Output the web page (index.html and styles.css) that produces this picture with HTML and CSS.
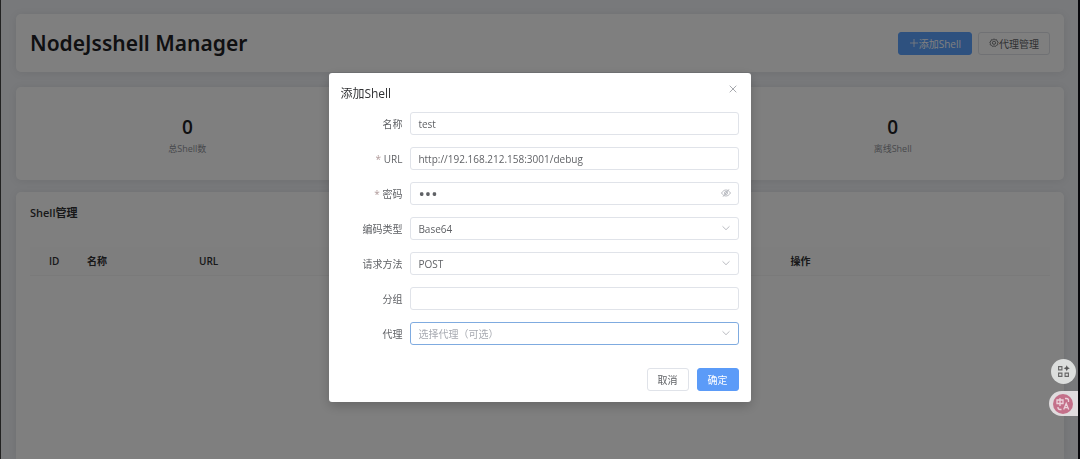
FILE: index.html
```html
<!DOCTYPE html>
<html lang="zh-CN">
<head>
<meta charset="utf-8">
<meta name="viewport" content="width=device-width, initial-scale=1">
<title>NodeJsshell Manager</title>
<link rel="stylesheet" href="styles.css">
</head>
<body>
<div class="page">
  <header class="card header">
    <h1 class="title">NodeJsshell Manager</h1>
    <div class="actions">
      <button class="btn btn-add" type="button">
        <svg class="icon" viewBox="0 0 10 10" aria-hidden="true"><path d="M5 1v8M1 5h8"/></svg>添加Shell
      </button>
      <button class="btn" type="button">
        <svg class="icon" viewBox="0 0 10 10" aria-hidden="true"><path d="M5 .8l1.1 1 1.5-.1.4 1.4 1.2.9-.6 1.3.3 1.4-1.4.5-.9 1.2L5 8l-1.6.4-.9-1.2-1.4-.5.3-1.4-.6-1.3L2 3.1l.4-1.4 1.5.1z"/><circle cx="5" cy="4.8" r="1.6"/></svg>代理管理
      </button>
    </div>
  </header>

  <section class="card stats">
    <div class="stat"><div class="stat-value">0</div><div class="stat-label">总Shell数</div></div>
    <div class="stat stat-last"><div class="stat-value">0</div><div class="stat-label">离线Shell</div></div>
  </section>

  <main class="card panel">
    <h2 class="panel-title">Shell管理</h2>
    <table class="table">
      <colgroup><col class="c-id"><col class="c-name"><col class="c-url"><col class="c-ops"></colgroup>
      <thead><tr><th class="th-id">ID</th><th>名称</th><th>URL</th><th>操作</th></tr></thead>
    </table>
  </main>
</div>

<div class="overlay">
  <form class="dialog" role="dialog" aria-labelledby="dialog-title">
    <div class="dialog-head">
      <h2 class="dialog-title" id="dialog-title">添加Shell</h2>
      <button class="close" type="button" aria-label="关闭">
        <svg class="icon" viewBox="0 0 10 10" aria-hidden="true"><path d="M1.7 1.7l6.6 6.6M8.3 1.7L1.7 8.3"/></svg>
      </button>
    </div>
    <div class="fields">
      <div class="row"><label for="name">名称</label><div class="control"><input id="name" type="text" value="test"></div></div>
      <div class="row"><label class="required" for="url">URL</label><div class="control"><input id="url" type="text" value="http://192.168.212.158:3001/debug"></div></div>
      <div class="row"><label class="required" for="password">密码</label><div class="control"><input id="password" type="password" value="123">
        <svg class="icon suffix" viewBox="0 0 10 10" aria-hidden="true"><path d="M.5 5C2 2.8 3.4 2 5 2s3 .8 4.500 3C8 7.200 6.600 8 5 8S2 7.200.5 5zM2 8.700L8 1.300"/><circle cx="5" cy="5" r="1.500"/></svg></div></div>
      <div class="row"><label for="encoding">编码类型</label><div class="control"><select id="encoding"><option>Base64</option></select>
        <svg class="icon suffix" viewBox="0 0 10 10" aria-hidden="true"><path d="M1.500 3.300L5 6.700l3.500-3.400"/></svg></div></div>
      <div class="row"><label for="method">请求方法</label><div class="control"><select id="method"><option>POST</option></select>
        <svg class="icon suffix" viewBox="0 0 10 10" aria-hidden="true"><path d="M1.500 3.300L5 6.700l3.500-3.400"/></svg></div></div>
      <div class="row"><label for="group">分组</label><div class="control"><input id="group" type="text"></div></div>
      <div class="row"><label for="proxy">代理</label><div class="control"><select class="active placeholder" id="proxy"><option>选择代理（可选）</option></select>
        <svg class="icon suffix" viewBox="0 0 10 10" aria-hidden="true"><path d="M1.500 3.300L5 6.700l3.500-3.400"/></svg></div></div>
    </div>
    <div class="dialog-foot">
      <button class="btn" type="button">取消</button>
      <button class="btn btn-primary" type="submit">确定</button>
    </div>
  </form>
</div>

<aside class="dock">
  <button class="dock-apps" type="button" aria-label="应用">
    <svg viewBox="0 0 14 14" aria-hidden="true"><path d="M1.700 1.700h3.600v3.600H1.700zM1.700 8.700h3.600v3.600H1.700zM8.700 8.700h3.600v3.600H8.700z"/><path class="spark" d="M10.500.2l1 2.300 2.300 1-2.300 1-1 2.300-1-2.300-2.300-1 2.300-1z"/></svg>
  </button>
  <button class="dock-translate" type="button" aria-label="翻译">
    <svg viewBox="0 0 20 20" aria-hidden="true"><circle class="disc" cx="10" cy="10" r="10"/><path d="M4 6h6v3.500H4zM7 4v8M12 4.500h1.500q2 0 2 2V8M5 13v.5q0 2 2 2h1.500M10.700 15.500l2.500-6 2.500 6M11.600 13.600h3.200"/></svg>
  </button>
</aside>
</body>
</html>
```
FILE: styles.css
```css
* { box-sizing: border-box; }

html, body { height: 100%; }

body {
  margin: 0;
  overflow: hidden;
  font-family: "Open Sans", "Noto Sans CJK SC", sans-serif;
  font-size: 10px;
  color: #606266;
}

h1, h2 { margin: 0; }

button, input, select { font: inherit; color: inherit; }

.page {
  display: flex;
  flex-direction: column;
  gap: 15px;
  min-height: 100%;
  padding: 14px 14px 0 15px;
  background: #f0f2f6;
  border-left: 1px solid #444;
  border-right: 2px solid #101018;
}

.card {
  background: #fff;
  border-radius: 5px;
  box-shadow: 0 1px 8px rgba(0, 0, 0, 0.08);
}

.header {
  display: flex;
  align-items: center;
  justify-content: space-between;
  padding: 17px 14px;
}

.title {
  font-family: "Noto Sans", sans-serif;
  font-size: 21px;
  line-height: 24px;
  font-weight: 600;
  color: #202124;
}

.actions { display: flex; gap: 6px; }

.btn {
  display: inline-flex;
  align-items: center;
  justify-content: center;
  height: 23px;
  padding: 0 10px;
  border: 1px solid #e0e3e9;
  border-radius: 3px;
  background: #fff;
  white-space: nowrap;
}

.btn-primary { background: #5b9bf8; border-color: #5b9bf8; color: #fff; }

.btn-add {
  background: #5ca2ff;
  border-color: #5ca2ff;
  color: #fff;
}

.icon {
  width: 10px;
  height: 10px;
  fill: none;
  stroke: currentColor;
  stroke-width: 0.8;
}

.stats {
  display: grid;
  grid-template-columns: repeat(3, 1fr);
  gap: 16px;
  padding: 27px 3px 23px;
}

.stat { text-align: center; }
.stat-last { grid-column: 3; }
.stat-value { font-size: 19px; line-height: 26px; font-weight: 600; color: #202124; }
.stat-label { font-size: 9px; line-height: 17px; color: #909399; }

.panel {
  flex: 1;
  margin-top: -3px;
  padding: 12px 14px;
  border-radius: 5px 5px 0 0;
}

.panel-title { font-size: 11px; line-height: 18px; font-weight: 600; color: #303133; }

.table {
  width: 100%;
  margin-top: 25px;
  border-collapse: collapse;
  table-layout: fixed;
}

.table th {
  height: 28px;
  padding: 0;
  text-align: left;
  font-weight: 600;
  color: #303133;
  background: #fcfcfc;
  border-bottom: 1px solid #f4f4f4;
}

.table .th-id { padding-left: 19px; }
.c-id { width: 57px; }
.c-name { width: 112px; }
.c-url { width: 58%; }

.overlay {
  position: fixed;
  inset: 0;
  display: flex;
  justify-content: center;
  align-items: flex-start;
  padding-top: 73px;
  background: rgba(0, 0, 0, 0.5);
}

.dialog {
  width: 39%;
  padding: 11px 12px 11px 11px;
  background: #fff;
  border-radius: 3px;
  box-shadow: 0 4px 12px rgba(0, 0, 0, 0.2);
}

.dialog-head {
  display: flex;
  justify-content: space-between;
  align-items: flex-start;
  height: 28px;
}

.dialog-title { font-size: 12px; line-height: 20px; font-weight: 400; color: #303133; }

.close {
  display: flex;
  padding: 0 1px 0 0;
  border: 0;
  background: none;
  color: #909399;
}

.fields { display: grid; gap: 12px; }

.row {
  display: grid;
  grid-template-columns: 62px 1fr;
  column-gap: 8px;
  align-items: center;
}

.row label { text-align: right; }
.required::before { content: "* "; color: #b09a9a; }

.control { position: relative; display: flex; }

.control input, .control select {
  width: 100%;
  height: 23px;
  padding: 0 7px;
  border: 1px solid #e0e3e9;
  border-radius: 3px;
  background: #fff;
  outline: none;
  appearance: none;
}

.control input[type="password"] { font-size: 17px; }
.control .active { border-color: #7fabe0; }
.control .placeholder { color: #a8abb2; }

.suffix {
  position: absolute;
  top: 6px;
  right: 8px;
  color: #a8abb2;
  pointer-events: none;
}

.dialog-foot {
  display: flex;
  justify-content: flex-end;
  gap: 8px;
  margin-top: 23px;
}

.dock {
  position: fixed;
  right: 2px;
  bottom: 43px;
  display: flex;
  flex-direction: column;
  align-items: flex-end;
  gap: 7px;
}

.dock button {
  display: flex;
  align-items: center;
  height: 25px;
  padding: 0;
  border: 0;
}

.dock-apps {
  justify-content: center;
  width: 25px;
  margin-right: 2px;
  border-radius: 50%;
  background: #dcdedd;
}

.dock-apps svg { width: 13px; height: 13px; fill: none; stroke: #666; stroke-width: 1.2; }
.dock-apps .spark { fill: #555; stroke: none; }

.dock .dock-translate {
  width: 29px;
  padding-left: 4px;
  border-radius: 13px 0 0 13px;
  background: #e0dcde;
}

.dock-translate svg { width: 20px; height: 20px; fill: none; stroke: #ecd3dc; stroke-width: 1.3; }
.dock-translate .disc { fill: #c4708a; stroke: none; }
```
